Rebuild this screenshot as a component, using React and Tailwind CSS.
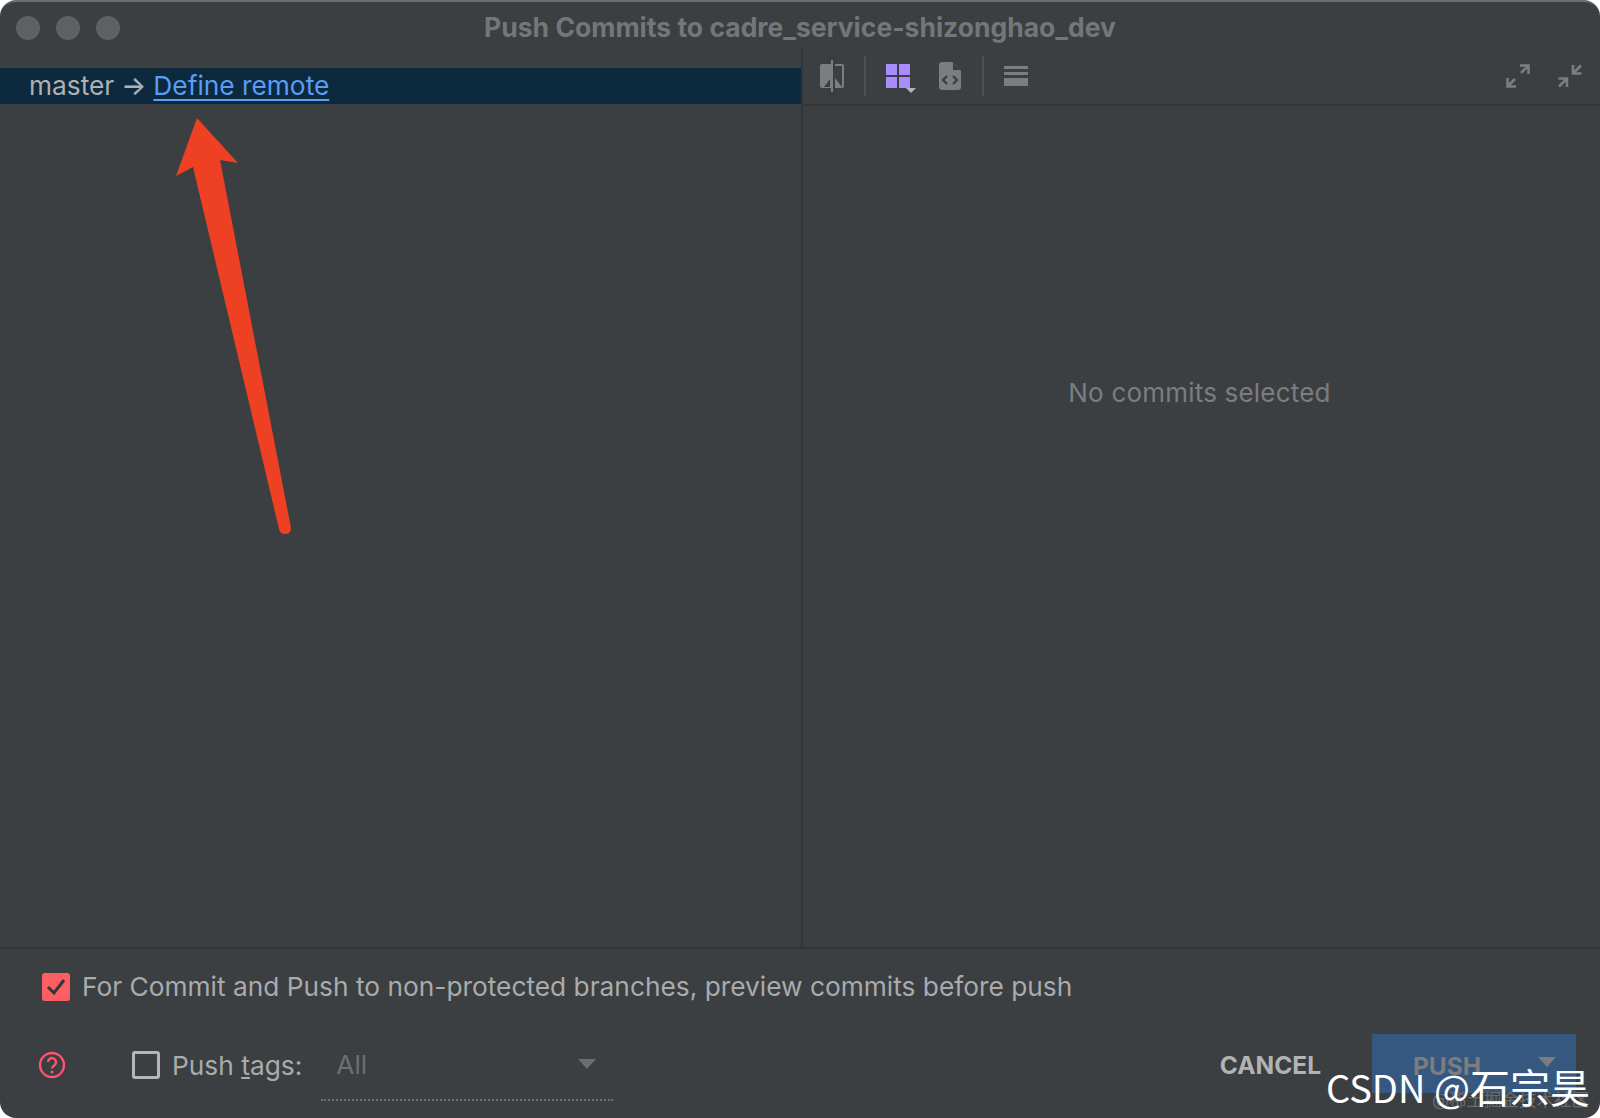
const font = { fontFamily: 'Inter, "Noto Sans CJK SC", sans-serif' };

const DiffIcon = () => (
  <svg width="26" height="32" viewBox="0 0 26 32" fill="none">
    <path d="M12 4H3a2 2 0 0 0-2 2v20a2 2 0 0 0 2 2h9z" fill="#7b7d7f" />
    <path d="M12 0h2v32h-2z" fill="#7b7d7f" />
    <path d="M16 4h7a2 2 0 0 1 2 2v20a2 2 0 0 1-2 2h-7v-2h7V6h-7z" fill="#7b7d7f" />
    <path d="M11 27H5l6-8z" fill="#3c3f41" />
    <path d="M16 27v-9l7 9z" fill="#7b7d7f" />
  </svg>
);

const GridIcon = () => (
  <svg width="31" height="29" viewBox="0 0 31 29">
    <path d="M0 0h11v11H0zM13 0h11v11H13zM0 13h11v11H0zM13 13h11v11H13z" fill="#ab8cff" />
    <path d="M20 24h10l-5 5z" fill="#a9b7c0" />
  </svg>
);

const FileCodeIcon = () => (
  <svg width="22" height="28" viewBox="0 0 22 28">
    <path d="M3 0h10l9 9v16a3 3 0 0 1-3 3H3a3 3 0 0 1-3-3V3a3 3 0 0 1 3-3z" fill="#7b7d7f" />
    <path d="M14 1v7h7z" fill="#3c3f41" />
    <path d="M8 14l-4 4 4 4M14 14l4 4-4 4" fill="none" stroke="#3c3f41" strokeWidth="2.4" />
  </svg>
);

const LinesIcon = () => (
  <svg width="24" height="20" viewBox="0 0 24 20" fill="#7b7d7f">
    <path d="M0 0h24v3H0zM0 6h24v3H0zM0 12h24v8H0z" />
  </svg>
);

const ExpandIcon = () => (
  <svg width="24" height="24" viewBox="0 0 24 24" fill="none" stroke="#7b7d7f" strokeWidth="2.6">
    <path d="M14 1.5h8.5V10M22 2l-7 7M10 22.5H1.500V14M2 22l7-7" />
  </svg>
);

const CollapseIcon = () => (
  <svg width="24" height="24" viewBox="0 0 24 24" fill="none" stroke="#7b7d7f" strokeWidth="2.6">
    <path d="M15 1v8.500h8.500M15.500 9L23 1.500M9 23v-8.500H.5M8.500 15L1 22.500" />
  </svg>
);

const Arrow = () => (
  <svg className="absolute left-0 top-0 pointer-events-none" width="320" height="560" viewBox="0 0 320 560">
    <path
      d="M197 118L238 163L220 160L291 528Q291 534 285 534Q280 534 279 529L193 167L176 176Z"
      fill="#ee4023"
    />
  </svg>
);

const Sep = () => <div className="w-[2px] h-10 bg-[#4d5052]" />;

const App = () => {
  return (
    <div className="w-[1600px] h-[1118px] bg-white relative overflow-hidden" style={font}>
      <div className="w-full h-full bg-[#3c3f41] rounded-[16px] border-t-2 border-[#6b6d6f] flex flex-col">
        {/* title bar */}
        <div className="h-[46px] pt-[6px] flex items-center relative shrink-0">
          <div className="flex items-center gap-4 pl-4">
            <div className="w-6 h-6 rounded-full bg-[#5e6062]" />
            <div className="w-6 h-6 rounded-full bg-[#5e6062]" />
            <div className="w-6 h-6 rounded-full bg-[#5e6062]" />
          </div>
          <div className="flex-1 text-center pr-[120px] text-[26.5px] font-bold text-[#747678]">
            Push Commits to cadre_service-shizonghao_dev
          </div>
        </div>

        {/* panes */}
        <div className="flex flex-1 min-h-0">
          <div className="w-[803px] shrink-0 border-r-2 border-[#323436] pt-5">
            <div className="h-9 bg-[#0d293e] flex items-center pl-[29px] text-[26.3px] text-[#afb1b3] gap-[7px]">
              <span>master</span>
              <span className="font-medium">→</span>
              <span className="text-[#589df6] underline underline-offset-4">Define remote</span>
            </div>
          </div>
          <div className="flex-1 flex flex-col">
            <div className="h-[58px] border-b-2 border-[#323436] flex items-center pl-4 pr-[18px] shrink-0">
              <DiffIcon />
              <div className="ml-[19px]"><Sep /></div>
              <div className="ml-5 mt-1"><GridIcon /></div>
              <div className="ml-[22px]"><FileCodeIcon /></div>
              <div className="ml-[21px]"><Sep /></div>
              <div className="ml-5"><LinesIcon /></div>
              <div className="ml-auto flex items-center gap-7">
                <ExpandIcon />
                <CollapseIcon />
              </div>
            </div>
            <div className="h-[572px] pr-1 flex items-center justify-center text-[26px] tracking-[0.2px] text-[#7b7d7f]">
              No commits selected
            </div>
          </div>
        </div>

        {/* footer */}
        <div className="h-[171px] shrink-0 border-t-2 border-[#323436] flex flex-col">
          <div className="flex items-center gap-3 pl-[42px] pt-[18px]">
            <div className="w-7 h-7 rounded-[3px] bg-[#fc5e63] flex items-center justify-center">
              <svg width="20" height="18" viewBox="0 0 20 18" fill="none" stroke="#34373a" strokeWidth="3">
                <path d="M2 9l6 6L18 2" />
              </svg>
            </div>
            <span className="text-[26.3px] text-[#a9abad]">
              For Commit and Push to non-protected branches, preview commits before push
            </span>
          </div>
          <div className="flex items-center pl-[39px] pr-6 mt-[23px]">
            <svg width="26" height="28" viewBox="0 0 26 28" fill="none">
              <circle cx="13" cy="14" r="12" stroke="#ff5370" strokeWidth="2.400" />
              <path d="M9 11a4 4 0 1 1 6.500 3.200c-1.500 1-2.500 1.800-2.500 3.300" stroke="#ff5370" strokeWidth="2.400" />
              <circle cx="13" cy="21" r="1.500" fill="#ff5370" />
            </svg>
            <div className="ml-[67px] w-7 h-7 rounded-[3px] border-[3px] border-[#b4b6b8]" />
            <span className="ml-3 text-[26.3px] text-[#a9abad]">
              Push <span className="underline underline-offset-2">t</span>ags:
            </span>
            <div className="ml-[19px] w-[292px] h-[72px] border-b-2 border-dotted border-[#6a6c6e] flex items-center pl-[15px] pr-[17px] text-[26.3px] text-[#6c6e70] justify-between">
              <span>All</span>
              <div className="w-0 h-0 border-l-[9px] border-r-[9px] border-t-[10px] border-l-transparent border-r-transparent border-t-[#6c6e70]" />
            </div>
            <div className="ml-auto flex items-start self-start">
              <span className="text-[24.5px] font-bold text-[#b1b3b5] mt-[18px] mr-[51px]">CANCEL</span>
              <div className="w-[204px] h-[59px] mt-[5px] pt-1 bg-[#365880] flex items-center justify-between pl-[41px] pr-5 text-[24.5px] font-bold text-[#7b7d7f]">
                <span>PUSH</span>
                <div className="w-0 h-0 -translate-y-1 border-l-[9px] border-r-[9px] border-t-[10px] border-l-transparent border-r-transparent border-t-[#7b7d7f]" />
              </div>
            </div>
          </div>
        </div>
      </div>

      {/* overlays */}
      <Arrow />
      <div className="absolute left-[1432px] top-[1087px] text-[17.5px] text-[#6a6c6e] whitespace-nowrap">@稀土掘金技术社区</div>
      <div className="absolute left-[1326px] top-[1062px] leading-[48px] text-white whitespace-nowrap" style={{ fontFamily: '"Noto Sans CJK SC", sans-serif' }}>
        <span className="text-[38px]">CSDN @</span>
        <span className="text-[40px]">石宗昊</span>
      </div>
    </div>
  );
};

export default App;
